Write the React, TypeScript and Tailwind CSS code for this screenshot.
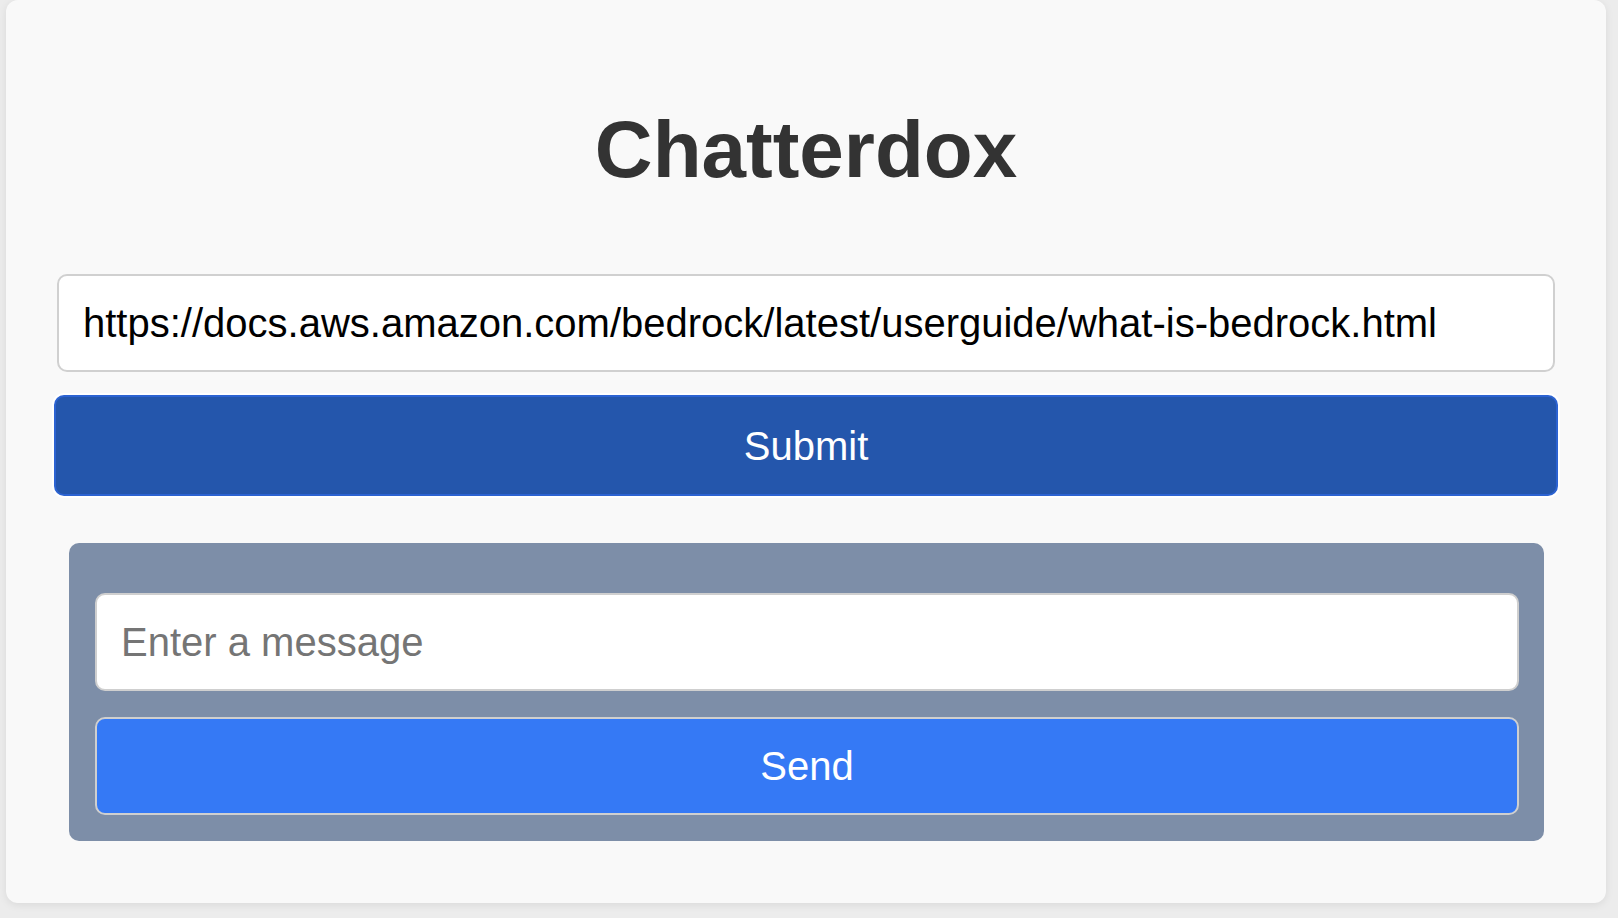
export default function App() {
  return (
    <div
      className="min-h-[918px] w-full bg-[#ececec] pl-[6px]"
      style={{ fontFamily: '"Liberation Sans", Arial, sans-serif' }}
    >
      <div className="flex h-[903px] w-[1600px] flex-col rounded-xl bg-[#f9f9f9] shadow-[0_2px_8px_rgba(0,0,0,0.08)]">
        <h1 className="pt-[110px] text-center text-[80px] font-bold leading-none text-[#333333]">
          Chatterdox
        </h1>

        <div className="mt-[84px] flex flex-col px-[48px]">
          <input
            type="text"
            defaultValue="https://docs.aws.amazon.com/bedrock/latest/userguide/what-is-bedrock.html"
            className="mx-[3px] h-[98px] rounded-[10px] border-2 border-[#d0d0d0] bg-white px-[24px] text-[40px] text-black outline-none"
          />
          <button className="mt-[23px] h-[101px] rounded-[10px] border-2 border-[#2c63d2] bg-[#2456ac] text-[40px] text-white ring-2 ring-white">
            Submit
          </button>
        </div>

        <div className="ml-[63px] mr-[62px] mt-[47px] flex flex-col gap-[26px] rounded-[10px] bg-[#7d8ea8] pb-[26px] pl-[26px] pr-[25px] pt-[50px]">
          <input
            type="text"
            placeholder="Enter a message"
            className="h-[98px] rounded-[10px] border-2 border-[#cfcfcf] bg-white px-[24px] text-[40px] text-black outline-none placeholder:text-[#757575]"
          />
          <button className="h-[98px] rounded-[10px] border-2 border-[#cfcfcf] bg-[#3579f5] text-[40px] text-white">
            Send
          </button>
        </div>
      </div>
    </div>
  );
}
